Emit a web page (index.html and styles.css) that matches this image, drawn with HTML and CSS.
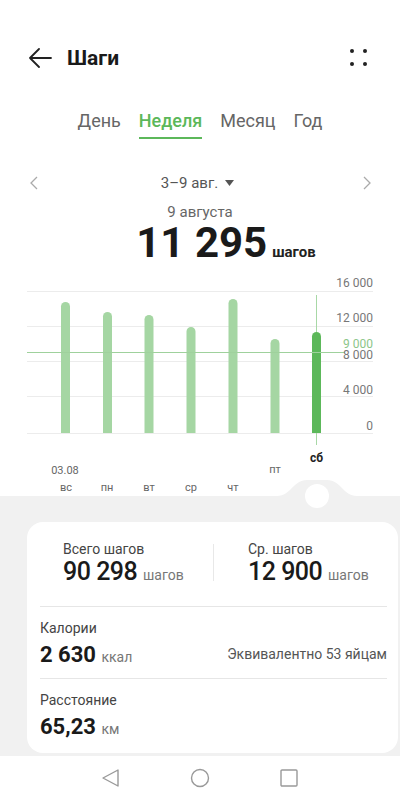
FILE: index.html
```html
<!DOCTYPE html>
<html lang="ru">
<head>
    <meta charset="UTF-8">
    <meta name="viewport" content="width=device-width, initial-scale=1.0">
    <title>Шаги</title>
    <link rel="stylesheet" href="styles.css">
</head>
<body>
    <header class="topbar">
        <svg class="back" width="24" height="20" viewBox="0 0 24 20">
            <path d="M23 10H2M11 1L2 10l9 9" fill="none" stroke="#222" stroke-width="1.8" stroke-linecap="round" stroke-linejoin="round"/>
        </svg>
        <h1>Шаги</h1>
        <svg class="menu" width="22" height="22" viewBox="0 0 22 22">
            <circle cx="4" cy="4" r="2" fill="#222"/>
            <circle cx="17" cy="4" r="2" fill="#222"/>
            <circle cx="4" cy="17" r="2" fill="#222"/>
            <circle cx="17" cy="17" r="2" fill="#222"/>
        </svg>
    </header>

    <nav class="tabs">
        <span class="tab">День</span>
        <span class="tab active">Неделя</span>
        <span class="tab">Месяц</span>
        <span class="tab">Год</span>
    </nav>

    <div class="range">
        <svg width="8" height="14" viewBox="0 0 8 14"><path d="M7 1L1 7l6 6" fill="none" stroke="#aaa" stroke-width="1.3"/></svg>
        <span class="range-label">3–9 авг.
            <svg width="9" height="7" viewBox="0 0 9 7"><path d="M0 0h9L4.5 6z" fill="#555"/></svg>
        </span>
        <svg width="8" height="14" viewBox="0 0 8 14"><path d="M1 1l6 6-6 6" fill="none" stroke="#aaa" stroke-width="1.3"/></svg>
    </div>

    <div class="day">9 августа</div>
    <div class="total"><span class="big">11 295</span><span class="unit">шагов</span></div>

    <svg class="chart" width="400" height="226" viewBox="0 0 400 226">
        <g stroke="#ececec" stroke-width="1">
            <line x1="27" y1="21.5" x2="373" y2="21.5"/>
            <line x1="27" y1="56.5" x2="373" y2="56.5"/>
            <line x1="27" y1="91.5" x2="373" y2="91.5"/>
            <line x1="27" y1="126.5" x2="373" y2="126.5"/>
            <line x1="27" y1="163.5" x2="373" y2="163.5"/>
        </g>
        <line x1="316.5" y1="25" x2="316.5" y2="175" stroke="#a8d8a6" stroke-width="1"/>
        <g fill="#a5d6a3">
            <path d="M61 163V36.5a4.5 4.5 0 0 1 9 0V163z"/>
            <path d="M103 163V46.5a4.5 4.5 0 0 1 9 0V163z"/>
            <path d="M144.5 163V49.5a4.5 4.5 0 0 1 9 0V163z"/>
            <path d="M186.5 163V61.5a4.5 4.5 0 0 1 9 0V163z"/>
            <path d="M228.5 163V33.5a4.5 4.5 0 0 1 9 0V163z"/>
            <path d="M270.5 163V73.5a4.5 4.5 0 0 1 9 0V163z"/>
        </g>
        <path d="M312 163V66.5a4.5 4.5 0 0 1 9 0V163z" fill="#5cb85a"/>
        <line x1="27" y1="82.5" x2="345" y2="82.5" stroke="#9fd19c" stroke-width="1"/>
        <g class="axis" text-anchor="end">
            <text x="373" y="17">16 000</text>
            <text x="373" y="52">12 000</text>
            <text x="373" y="78" class="goal">9 000</text>
            <text x="373" y="89">8 000</text>
            <text x="373" y="124">4 000</text>
            <text x="373" y="160">0</text>
        </g>
        <g class="days" text-anchor="middle">
            <text x="316.5" y="192" class="sel">сб</text>
            <text x="65" y="204">03.08</text>
            <text x="275" y="203">пт</text>
            <text x="66" y="221">вс</text>
            <text x="107" y="221">пн</text>
            <text x="149" y="221">вт</text>
            <text x="191" y="221">ср</text>
            <text x="233" y="221">чт</text>
        </g>
    </svg>

    <section class="summary">
        <svg class="knob" width="80" height="32" viewBox="0 0 80 32">
            <path d="M0 17C14 17 16 1 30 1h20c14 0 16 16 30 16v15H0z" fill="#f1f1f1"/>
            <circle cx="40" cy="17" r="12" fill="#fff"/>
        </svg>
        <div class="card">
            <div class="stats">
                <div class="stat">
                    <div class="label">Всего шагов</div>
                    <div class="value mid">90 298 <small>шагов</small></div>
                </div>
                <div class="vline"></div>
                <div class="stat right">
                    <div class="label">Ср. шагов</div>
                    <div class="value mid">12 900 <small>шагов</small></div>
                </div>
            </div>
            <div class="row">
                <div class="label">Калории</div>
                <div class="line">
                    <div class="value">2 630 <small>ккал</small></div>
                    <div class="note">Эквивалентно 53 яйцам</div>
                </div>
            </div>
            <div class="row last">
                <div class="label">Расстояние</div>
                <div class="value">65,23 <small>км</small></div>
            </div>
        </div>
    </section>

    <footer class="navbar">
        <svg width="20" height="20" viewBox="0 0 20 20"><path d="M17 2v16L2 10z" fill="none" stroke="#999" stroke-width="1.4" stroke-linejoin="round"/></svg>
        <svg width="20" height="20" viewBox="0 0 20 20"><circle cx="10" cy="10" r="8.5" fill="none" stroke="#999" stroke-width="1.4"/></svg>
        <svg width="20" height="20" viewBox="0 0 20 20"><rect x="2" y="2" width="16" height="16" rx="1" fill="none" stroke="#999" stroke-width="1.4"/></svg>
    </footer>
</body>
</html>
```

FILE: styles.css
```css
body {
    margin: 0;
    width: 400px;
    height: 800px;
    overflow: hidden;
    font-family: Roboto, "Noto Sans", sans-serif;
    background-color: #fff;
    color: #222;
}
.topbar {
    display: flex;
    align-items: center;
    height: 40px;
    padding: 38px 30px 0 28px;
}
.topbar h1 {
    margin: 0 0 0 15px;
    font-size: 21px;
    font-weight: 700;
    color: #1a1a1a;
}
.menu {
    margin-left: auto;
}
.tabs {
    display: flex;
    justify-content: center;
    gap: 18px;
    margin-top: 31px;
    font-size: 18px;
    line-height: 24px;
    color: #666;
}
.tab {
    padding-bottom: 4px;
    border-bottom: 2px solid transparent;
}
.tab.active {
    color: #5cb85a;
    font-weight: 500;
    border-bottom-color: #5cb85a;
}
.range {
    display: flex;
    align-items: center;
    justify-content: space-between;
    margin-top: 32px;
    padding: 0 29px 0 30px;
    height: 24px;
}
.range-label {
    font-size: 15px;
    color: #555;
    display: flex;
    align-items: center;
    gap: 7px;
    margin-left: -6px;
}
.day {
    margin-top: 7px;
    text-align: center;
    font-size: 15px;
    line-height: 20px;
    color: #666;
}
.total {
    display: flex;
    justify-content: center;
    align-items: baseline;
    height: 36px;
    margin: 3px 0 0 52px;
}
.big {
    font-size: 42px;
    font-weight: 700;
    line-height: 36px;
    color: #1a1a1a;
}
.unit {
    font-size: 15px;
    font-weight: 700;
    line-height: 16px;
    margin-left: 5px;
}
.chart {
    display: block;
    margin-top: 9px;
}
.axis text {
    font-size: 12px;
    fill: #777;
}
.axis .goal {
    fill: #8cc68a;
}
.days text {
    font-size: 11px;
    fill: #666;
}
.days .sel {
    font-size: 12px;
    font-weight: 700;
    fill: #222;
}
.summary {
    position: relative;
    background-color: #f1f1f1;
    padding: 26px 2px 3px 27px;
}
.knob {
    position: absolute;
    top: -17px;
    left: 277px;
}
.card {
    background-color: #fff;
    border-radius: 16px;
    padding: 0 11px 0 13px;
}
.stats {
    display: grid;
    grid-template-columns: 1fr 1px 1fr;
    align-items: center;
    padding: 17px 0 21px;
    border-bottom: 1px solid #e6e6e6;
}
.stat {
    padding-left: 23px;
}
.stat.right {
    padding-left: 34px;
}
.vline {
    height: 37px;
    background-color: #e8e8e8;
}
.label {
    font-size: 14px;
    line-height: 20px;
    color: #444;
}
.value {
    font-size: 22px;
    font-weight: 700;
    line-height: 30px;
    color: #1a1a1a;
}
.value.mid {
    font-size: 25px;
    font-weight: 500;
    line-height: 26px;
    letter-spacing: -0.5px;
}
.value small {
    font-size: 14px;
    font-weight: 400;
    line-height: 0;
    color: #777;
    letter-spacing: 0;
}
.row {
    padding: 11px 0 8px;
    border-bottom: 1px solid #e6e6e6;
}
.row .value {
    margin-top: 2px;
}
.row.last {
    padding-bottom: 11px;
    border-bottom: none;
}
.line {
    display: flex;
    align-items: center;
    justify-content: space-between;
}
.note {
    font-size: 14px;
    color: #555;
}
.navbar {
    display: flex;
    justify-content: center;
    align-items: center;
    gap: 69px;
    height: 44px;
}
```
